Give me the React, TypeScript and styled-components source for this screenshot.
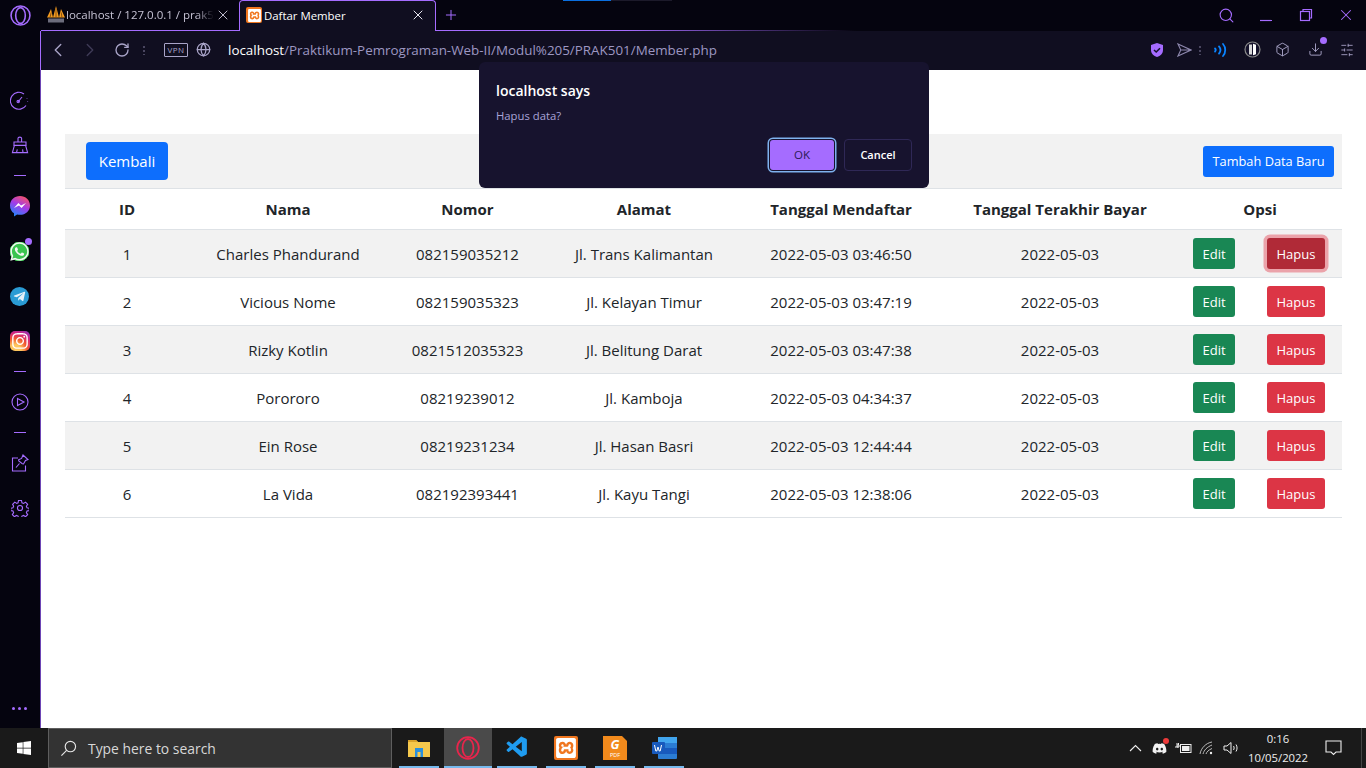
import React from 'react';
import styled, { createGlobalStyle } from 'styled-components';
import {
  LuChevronLeft,
  LuChevronRight,
  LuRotateCw,
  LuGlobe,
  LuX,
  LuPlus,
  LuSearch,
  LuBox,
  LuSlidersHorizontal,
  LuDownload,
} from 'react-icons/lu';
import { FaWhatsapp, FaTelegramPlane, FaInstagram, FaDiscord, FaWindows } from 'react-icons/fa';
import { SiXampp } from 'react-icons/si';
import { VscVscode } from 'react-icons/vsc';

const purple = '#a56cff';
const uiFont = '"Open Sans", "Noto Sans", "Liberation Sans", sans-serif';

const members = [
  ['1', 'Charles Phandurand', '082159035212', 'Jl. Trans Kalimantan', '2022-05-03 03:46:50', '2022-05-03'],
  ['2', 'Vicious Nome', '082159035323', 'Jl. Kelayan Timur', '2022-05-03 03:47:19', '2022-05-03'],
  ['3', 'Rizky Kotlin', '0821512035323', 'Jl. Belitung Darat', '2022-05-03 03:47:38', '2022-05-03'],
  ['4', 'Porororo', '08219239012', 'Jl. Kamboja', '2022-05-03 04:34:37', '2022-05-03'],
  ['5', 'Ein Rose', '08219231234', 'Jl. Hasan Basri', '2022-05-03 12:44:44', '2022-05-03'],
  ['6', 'La Vida', '082192393441', 'Jl. Kayu Tangi', '2022-05-03 12:38:06', '2022-05-03'],
];

const columns = [124, 198, 161, 192, 202, 236, 164];
const headers = ['ID', 'Nama', 'Nomor', 'Alamat', 'Tanggal Mendaftar', 'Tanggal Terakhir Bayar', 'Opsi'];

export default function App() {
  return (
    <Page>
      <GlobalStyle />
      <TabStrip>
        <LogoSlot>
          <OperaMark size={21} color={purple} />
        </LogoSlot>
        <Tab>
          <PmaIcon />
          <TabTitle>localhost / 127.0.0.1 / prak5</TabTitle>
          <TabClose>
            <LuX size={16} strokeWidth={1.5} />
          </TabClose>
        </Tab>
        <ActiveTab>
          <XamppBadge $size={16}>
            <SiXampp size={13} />
          </XamppBadge>
          <ActiveTitle>Daftar Member</ActiveTitle>
          <TabClose $bright>
            <LuX size={16} strokeWidth={1.5} />
          </TabClose>
        </ActiveTab>
        <NewTab>
          <LuPlus size={16} strokeWidth={1.5} />
        </NewTab>
        <LoadBar />
        <WindowControls>
          <WindowBtn>
            <LuSearch size={17} strokeWidth={1.6} />
          </WindowBtn>
          <WindowBtn>
            <svg width="14" height="14" viewBox="0 0 14 14">
              <path d="M1 12.500h12" stroke={purple} strokeWidth="1.200" />
            </svg>
          </WindowBtn>
          <WindowBtn>
            <svg width="14" height="14" viewBox="0 0 14 14" fill="none" stroke={purple} strokeWidth="1.200">
              <rect x="1.500" y="3.500" width="9" height="9" />
              <path d="M4 3.500V1.500h8.500V10h-2" />
            </svg>
          </WindowBtn>
          <WindowBtn>
            <LuX size={18} strokeWidth={1.4} />
          </WindowBtn>
        </WindowControls>
      </TabStrip>

      <AddressBar>
        <NavIcons>
          <NavBtn>
            <LuChevronLeft size={22} strokeWidth={1.5} />
          </NavBtn>
          <NavBtn $dim>
            <LuChevronRight size={22} strokeWidth={1.5} />
          </NavBtn>
          <NavBtn>
            <LuRotateCw size={16} />
          </NavBtn>
          <Dots />
        </NavIcons>
        <VpnBadge>VPN</VpnBadge>
        <LuGlobe size={15} color="#a9a4c8" />
        <Url>
          <b>localhost</b>/Praktikum-Pemrograman-Web-II/Modul%205/PRAK501/Member.php
        </Url>
        <ToolIcons>
          <ToolSlot>
            <svg width="16" height="16" viewBox="0 0 16 16">
              <path d="M8 1l6 2v5c0 3.600-2.600 5.800-6 7-3.400-1.200-6-3.400-6-7V3z" fill={purple} />
              <path d="M5 8l2.200 2L11 6.300" fill="none" stroke="#14112a" strokeWidth="1.600" />
            </svg>
          </ToolSlot>
          <ToolSlot $ml={7}>
            <svg width="15" height="14" viewBox="0 0 15 14" fill="none" stroke="#8d87ad" strokeWidth="1.100">
              <path d="M1 1l13 6-13 6 2.800-6zM3.800 7H14" />
            </svg>
          </ToolSlot>
          <Dots />
          <ToolSlot $ml={5}>
            <svg width="16" height="16" viewBox="0 0 16 16" fill="none" stroke="#0a84ff" strokeWidth="1.800" strokeLinecap="round">
              <path d="M2 6.400c.9 1 .9 2.200 0 3.200M6 4.400c1.800 2.200 1.800 5 0 7.200M10 2c3 3.400 3 8.600 0 12" />
            </svg>
          </ToolSlot>
          <ToolSlot $ml={11}>
            <svg width="17" height="17" viewBox="0 0 17 17">
              <circle cx="8.500" cy="8.500" r="7.500" fill="#14112a" stroke="#8a8a8a" strokeWidth="1.200" />
              <path d="M5 3.500h3v10H5z" fill="#d8d8d8" />
              <path d="M9 2.800l3 1v9.400l-3 1z" fill="#fff" />
            </svg>
          </ToolSlot>
          <ToolSlot $ml={10}>
            <LuBox size={15} color="#a9a4c8" strokeWidth={1.5} />
          </ToolSlot>
          <ToolSlot $ml={13}>
            <LuDownload size={15} color="#a9a4c8" strokeWidth={1.5} />
            <Notice $right={-2} $top={-5} />
          </ToolSlot>
          <ToolSlot $ml={12}>
            <LuSlidersHorizontal size={14} color="#a9a4c8" strokeWidth={1.5} />
          </ToolSlot>
        </ToolIcons>
      </AddressBar>

      <Body>
        <Sidebar>
          <RailIcon>
            <svg width="19" height="19" viewBox="0 0 19 19" fill="none" stroke={purple} strokeWidth="1.100">
              <path d="M16 14.500a8.500 8.500 0 1 1-2-11.500" />
              <path d="M8 11l4-5" />
              <circle cx="8.200" cy="10.600" r="1.200" />
              <path d="M17 7v.6M17.600 10v.6" />
            </svg>
          </RailIcon>
          <RailIcon>
            <svg width="18" height="18" viewBox="0 0 18 18" fill="none" stroke={purple} strokeWidth="1.100">
              <path d="M7 6V2.200c0-1.400 3.600-1.400 3.600 0V6" />
              <path d="M3 6h12v3.400H3z" />
              <path d="M3.400 9.400L1.400 16.600h15.200L14.600 9.400M5.500 16.600l.8-3.200M12 16.600l-.4-3.200" />
            </svg>
          </RailIcon>
          <RailRule />
          <RailIcon>
            <svg width="20" height="21" viewBox="0 0 20 21">
              <defs>
                <linearGradient id="msgr" x1="0.700" y1="0" x2="0.200" y2="1">
                  <stop offset="0" stopColor="#f5536b" />
                  <stop offset="0.450" stopColor="#a33be8" />
                  <stop offset="1" stopColor="#1a8cff" />
                </linearGradient>
              </defs>
              <path d="M10 0c5.600 0 10 4 10 9.400s-4.400 9.400-10 9.400c-1 0-2-.1-2.900-.4L4 20.500v-3.200C1.500 15.600 0 12.700 0 9.400 0 4 4.400 0 10 0z" fill="url(#msgr)" />
              <path d="M4 12l4.400-5 2.600 2.400L16 7l-4.400 5-2.600-2.400z" fill="#fff" />
            </svg>
          </RailIcon>
          <RailIcon>
            <WhatsappWrap>
              <FaWhatsapp size={21} />
              <Notice $right={-2} $top={-3} />
            </WhatsappWrap>
          </RailIcon>
          <RailIcon>
            <TelegramRound>
              <FaTelegramPlane size={13} />
            </TelegramRound>
          </RailIcon>
          <RailIcon>
            <InstagramSquare>
              <FaInstagram size={18} />
            </InstagramSquare>
          </RailIcon>
          <RailRule />
          <RailIcon>
            <svg width="18" height="18" viewBox="0 0 18 18" fill="none" stroke={purple} strokeWidth="1.100">
              <circle cx="9" cy="9" r="8" />
              <path d="M6.500 5.500L13 9l-6.500 3.500z" />
            </svg>
          </RailIcon>
          <RailRule />
          <RailIcon>
            <svg width="18" height="18" viewBox="0 0 18 18" fill="none" stroke={purple} strokeWidth="1.100">
              <path d="M7 4H1.500v13h13v-5.500" />
              <path d="M12 1l5 4.500-2.500 1-2 3.500-1.200-.2L7.800 7l-.2-1.200 3-1.400z" />
              <path d="M8.500 9.500L5 13.500" />
            </svg>
          </RailIcon>
          <RailIcon>
            <svg width="18" height="18" viewBox="0 0 24 24" fill="none" stroke={purple} strokeWidth="1.500">
              <circle cx="12" cy="12" r="3.400" />
              <path d="M10 2h4l.6 3 2.200.9 2.600-1.700 2.800 2.800-1.700 2.600.9 2.200 3 .6v3l-3 .6-.9 2.200 1.700 2.600-2.800 2.800-2.600-1.700-2.200.9-.6 3h-4l-.6-3-2.200-.9-2.600 1.700-2.800-2.800 1.700-2.600-.9-2.200-3-.6v-3l3-.6.9-2.200L2.200 7l2.800-2.800 2.600 1.700L9.400 5z" />
            </svg>
          </RailIcon>
          <RailDots>
            <i />
            <i />
            <i />
          </RailDots>
        </Sidebar>

        <Content>
          <TopPanel>
            <BackButton>Kembali</BackButton>
            <AddButton>Tambah Data Baru</AddButton>
          </TopPanel>
          <MemberTable>
            <colgroup>
              {columns.map((w, i) => (
                <col key={i} width={w} />
              ))}
            </colgroup>
            <thead>
              <tr>
                {headers.map((h) => (
                  <Th key={h}>{h}</Th>
                ))}
              </tr>
            </thead>
            <tbody>
              {members.map((row, i) => (
                <Row key={row[0]} $striped={i % 2 === 0}>
                  {row.map((cell, j) => (
                    <Td key={j}>{cell}</Td>
                  ))}
                  <ActionCell>
                    <Actions>
                      <EditButton>Edit</EditButton>
                      <DeleteButton $focus={i === 0}>Hapus</DeleteButton>
                    </Actions>
                  </ActionCell>
                </Row>
              ))}
            </tbody>
          </MemberTable>
        </Content>
      </Body>

      <Taskbar>
        <StartBtn>
          <FaWindows size={16} />
        </StartBtn>
        <SearchBox>
          <svg width="17" height="17" viewBox="0 0 18 18" fill="none" stroke="#e6e6e6" strokeWidth="1.200">
            <circle cx="11" cy="7" r="5.500" />
            <path d="M7 11l-5.500 5.500" />
          </svg>
          <span>Type here to search</span>
        </SearchBox>
        <TaskApps>
          <TaskApp $width={40} $gap={0}>
            <svg width="22" height="19" viewBox="0 0 22 19">
              <path d="M0 2h8l2 2h12v15H0z" fill="#f5c84c" />
              <path d="M0 2h8l2 2H0z" fill="#d9a22a" />
              <path d="M7 10h8v9h-2.500v-5h-3v5H7z" fill="#2a8fdc" />
            </svg>
          </TaskApp>
          <TaskApp $active $width={48} $gap={5}>
            <OperaMark size={24} color="#e8254c" />
          </TaskApp>
          <TaskApp $width={40} $gap={5}>
            <VscVscode size={25} color="#1f9cf0" />
          </TaskApp>
          <TaskApp $width={40} $gap={9}>
            <XamppBadge $size={24}>
              <SiXampp size={20} />
            </XamppBadge>
          </TaskApp>
          <TaskApp $width={40} $gap={9}>
            <FoxitBadge>
              <b>G</b>
              <small>PDF</small>
            </FoxitBadge>
          </TaskApp>
          <TaskApp $width={40} $gap={9}>
            <svg width="25" height="22" viewBox="0 0 25 22">
              <rect x="6" y="0" width="19" height="22" rx="1" fill="#2b7cd3" />
              <rect x="6" y="0" width="19" height="6" fill="#41a5ee" />
              <rect x="6" y="11" width="19" height="6" fill="#185abd" />
              <rect x="0" y="5" width="13" height="12" rx="1" fill="#185abd" />
              <path d="M2.500 8l1.300 6h1l1.200-4 1.200 4h1l1.300-6" fill="none" stroke="#fff" strokeWidth="1" />
            </svg>
          </TaskApp>
        </TaskApps>
        <Tray>
          <TraySlot>
            <svg width="13" height="8" viewBox="0 0 13 8" fill="none" stroke="#eee" strokeWidth="1.100">
              <path d="M1 7l5.500-5.500L12 7" />
            </svg>
          </TraySlot>
          <TraySlot>
            <DiscordWrap>
              <FaDiscord size={15} />
              <RedDot />
            </DiscordWrap>
          </TraySlot>
          <TraySlot>
            <svg width="17" height="12" viewBox="0 0 17 12" fill="none" stroke="#eee">
              <rect x="5.500" y="2.500" width="10.500" height="8" />
              <rect x="7" y="4" width="7.500" height="5" fill="#eee" stroke="none" />
              <path d="M0 5h3.500M2 1v2M3.500 1v2M2 3h2v2H2z" />
            </svg>
          </TraySlot>
          <TraySlot>
            <svg width="16" height="14" viewBox="0 0 16 14" fill="none" stroke="#bbb" strokeWidth="1">
              <path d="M1 13C2 7 7 2 13 1M4 13c1-4 4-7 9-9M7 13c.5-2 2.500-4 6-5.500" />
              <circle cx="12" cy="12" r="1.200" fill="#eee" stroke="none" />
            </svg>
          </TraySlot>
          <TraySlot>
            <svg width="17" height="14" viewBox="0 0 17 14" fill="none" stroke="#eee" strokeWidth="1">
              <path d="M1 5h3l4-3.500v11L4 9H1z" />
              <path d="M10.500 5c.8 1.200.8 2.800 0 4M13 3.500c1.400 2 1.400 5 0 7" />
            </svg>
          </TraySlot>
          <Clock>
            <span>0:16</span>
            <span>10/05/2022</span>
          </Clock>
          <TraySlot $wide>
            <svg width="17" height="16" viewBox="0 0 17 16" fill="none" stroke="#eee" strokeWidth="1.100">
              <path d="M1 1h15v11h-5l-2.500 2.500L6 12H1z" />
            </svg>
          </TraySlot>
        </Tray>
      </Taskbar>

      <AlertBox>
        <AlertTitle>localhost says</AlertTitle>
        <AlertText>Hapus data?</AlertText>
        <AlertActions>
          <OkButton>OK</OkButton>
          <CancelButton>Cancel</CancelButton>
        </AlertActions>
      </AlertBox>
    </Page>
  );
}

function OperaMark({ size, color }: { size: number; color: string }) {
  return (
    <svg width={size} height={size} viewBox="0 0 24 24" fill="none" stroke={color} strokeWidth="1.800">
      <circle cx="12" cy="12" r="10.800" />
      <ellipse cx="12" cy="12" rx="5.500" ry="9" />
    </svg>
  );
}

function PmaIcon() {
  return (
    <svg width="18" height="17" viewBox="0 0 18 17">
      <path d="M0 11.500L4 3l2 8.500zM6 11.500L9 0l3 11.500zM12 11.500L14 3l4 8.500z" fill="#f29a1f" />
      <path d="M3 11.500l1.200-5M9 11.500V3M15 11.500l-.8-5" stroke="#7a4a10" strokeWidth=".9" />
      <rect x="1" y="12.500" width="16" height="4" fill="#6c6c7c" />
    </svg>
  );
}

const GlobalStyle = createGlobalStyle`
  html, body {
    margin: 0;
    padding: 0;
    background: #fff;
    overflow: hidden;
  }
  * {
    box-sizing: border-box;
  }
`;

const Page = styled.div`
  position: relative;
  width: 1366px;
  height: 768px;
  display: flex;
  flex-direction: column;
  background: #05040f;
  font-family: ${uiFont};
  overflow: hidden;
`;

const TabStrip = styled.div`
  position: relative;
  height: 31px;
  flex: none;
  display: flex;
  align-items: flex-start;
  background: #05040f;

  &::after {
    content: '';
    position: absolute;
    left: 436px;
    bottom: 0;
    width: 420px;
    height: 1px;
    background: linear-gradient(90deg, ${purple} 0 45%, transparent 100%);
  }
`;

const LogoSlot = styled.div`
  width: 41px;
  height: 31px;
  flex: none;
  display: flex;
  align-items: center;
  justify-content: center;
`;

const Tab = styled.div`
  width: 198px;
  height: 31px;
  flex: none;
  display: flex;
  align-items: center;
  padding: 0 8px 1px 6px;
  gap: 1px;
  border-bottom: 1px solid ${purple};
`;

const TabTitle = styled.span`
  flex: 1;
  min-width: 0;
  overflow: hidden;
  white-space: nowrap;
  font-size: 11.500px;
  color: #c6c3d4;
  mask-image: linear-gradient(90deg, #000 88%, transparent 100%);
`;

const TabClose = styled.span<{ $bright?: boolean }>`
  display: flex;
  color: ${(p) => (p.$bright ? '#e8e6f0' : '#bdbacb')};
`;

const ActiveTab = styled.div`
  width: 197px;
  height: 31px;
  flex: none;
  display: flex;
  align-items: center;
  padding: 0 9px 2px 6px;
  gap: 2px;
  background: #100e20;
  border: 1px solid ${purple};
  border-bottom: none;
  border-radius: 4px 4px 0 0;
`;

const ActiveTitle = styled.span`
  flex: 1;
  font-size: 11.400px;
  font-weight: 500;
  color: #fff;
`;

const XamppBadge = styled.span<{ $size: number }>`
  width: ${(p) => p.$size}px;
  height: ${(p) => p.$size}px;
  flex: none;
  display: flex;
  align-items: center;
  justify-content: center;
  border-radius: 2px;
  background: #f0761f;
  color: #fff;
`;

const NewTab = styled.span`
  display: flex;
  align-items: center;
  height: 30px;
  padding-left: 7px;
  color: ${purple};
`;

const LoadBar = styled.div`
  position: absolute;
  left: 563px;
  top: 0;
  width: 109px;
  height: 1px;
  background: linear-gradient(90deg, #0a6fe0 0 44%, #1c1a2a 44% 100%);
`;

const WindowControls = styled.div`
  margin-left: auto;
  display: flex;
  align-items: center;
  height: 30px;
`;

const WindowBtn = styled.span`
  width: 40px;
  height: 30px;
  display: flex;
  align-items: center;
  justify-content: center;
  color: ${purple};
`;

const AddressBar = styled.div`
  height: 39px;
  flex: none;
  margin-left: 40px;
  display: flex;
  align-items: center;
  padding: 0 9px 2px 1px;
  background: #100e20;
  border-left: 1px solid ${purple};
`;

const NavIcons = styled.div`
  display: flex;
  align-items: center;
  width: 122px;
  flex: none;
`;

const NavBtn = styled.span<{ $dim?: boolean }>`
  width: 32px;
  display: flex;
  justify-content: center;
  color: ${(p) => (p.$dim ? '#3f3b57' : '#a9a4c8')};
`;

const Dots = styled.span`
  width: 2px;
  height: 10px;
  margin: 0 5px;
  background-image: radial-gradient(circle, #4a4660 1px, transparent 1px);
  background-size: 2px 4px;
`;

const VpnBadge = styled.span`
  width: 24px;
  height: 14px;
  margin-right: 8px;
  flex: none;
  display: flex;
  align-items: center;
  justify-content: center;
  border: 1px solid #a9a4c8;
  border-radius: 1px;
  font-size: 8px;
  letter-spacing: 0.5px;
  color: #a9a4c8;
`;

const Url = styled.div`
  margin-left: 17px;
  flex: 1;
  font-size: 13.400px;
  white-space: nowrap;
  color: #9d97c2;

  b {
    font-weight: 400;
    color: #fff;
  }
`;

const ToolIcons = styled.div`
  display: flex;
  align-items: center;
`;

const ToolSlot = styled.span<{ $ml?: number }>`
  position: relative;
  width: 20px;
  margin-left: ${(p) => p.$ml ?? 0}px;
  display: flex;
  justify-content: center;
`;

const Notice = styled.span<{ $right: number; $top: number }>`
  position: absolute;
  right: ${(p) => p.$right}px;
  top: ${(p) => p.$top}px;
  width: 7px;
  height: 7px;
  border-radius: 50%;
  background: ${purple};
`;

const Body = styled.div`
  flex: 1;
  min-height: 0;
  display: flex;
`;

const Sidebar = styled.nav`
  width: 41px;
  flex: none;
  display: flex;
  flex-direction: column;
  align-items: center;
  gap: 15px;
  padding: 15px 1px 18px 0;
  background: #05040f;
  border-right: 1px solid #6d45b5;
`;

const RailIcon = styled.div`
  width: 30px;
  height: 30px;
  flex: none;
  display: flex;
  align-items: center;
  justify-content: center;
`;

const RailRule = styled.div`
  width: 12px;
  height: 1px;
  flex: none;
  background: ${purple};
`;

const RailDots = styled.div`
  margin-top: auto;
  display: flex;
  gap: 3px;

  i {
    width: 3px;
    height: 3px;
    border-radius: 50%;
    background: ${purple};
  }
`;

const WhatsappWrap = styled.span`
  position: relative;
  display: flex;
  color: #f2f6f2;
  border-radius: 50%;
  background: radial-gradient(circle, #3ac44f 0 66%, transparent 67%);
`;

const TelegramRound = styled.span`
  width: 19px;
  height: 19px;
  display: flex;
  align-items: center;
  justify-content: center;
  border-radius: 50%;
  background: #2a9bd4;
  color: #e4f2fa;
`;

const InstagramSquare = styled.span`
  width: 20px;
  height: 20px;
  display: flex;
  align-items: center;
  justify-content: center;
  border-radius: 5px;
  color: #fff;
  background: radial-gradient(circle at 25% 100%, #fdc65e 0 25%, #f0562f 50%, #d4267f 72%, #7a35c9 100%);
`;

const Content = styled.main`
  flex: 1;
  min-width: 0;
  padding: 64px 24px 0;
  background: #fff;
  font-family: ${uiFont};
  color: #212529;
`;

const TopPanel = styled.div`
  height: 55px;
  display: flex;
  align-items: center;
  justify-content: space-between;
  padding: 0 8px 0 21px;
  background: #f2f2f2;
  border-bottom: 1px solid #dee2e6;
`;

const BackButton = styled.button`
  height: 38px;
  width: 82px;
  padding: 0;
  border: none;
  border-radius: 4px;
  background: #0d6efd;
  color: #fff;
  font: 400 15px ${uiFont};
`;

const AddButton = styled.button`
  height: 31px;
  width: 131px;
  padding: 0;
  border: none;
  border-radius: 3px;
  background: #0d6efd;
  color: #fff;
  font: 400 12.800px ${uiFont};
`;

const MemberTable = styled.table`
  width: 1277px;
  table-layout: fixed;
  border-collapse: collapse;
  font-size: 15px;
`;

const Th = styled.th`
  height: 40px;
  padding: 0;
  font-weight: 700;
  text-align: center;
  border-bottom: 1px solid #dee2e6;
`;

const Row = styled.tr<{ $striped: boolean }>`
  background: ${(p) => (p.$striped ? '#f2f2f2' : '#fff')};
`;

const Td = styled.td`
  height: 48px;
  padding: 2px 0 0;
  text-align: center;
  border-bottom: 1px solid #dee2e6;
`;

const ActionCell = styled(Td)`
  padding: 0;
`;

const Actions = styled.div`
  display: flex;
  align-items: center;
  padding-left: 15px;
  gap: 32px;
`;

const EditButton = styled.button`
  width: 42px;
  height: 31px;
  padding: 2px 0 0;
  border: none;
  border-radius: 3px;
  background: #198754;
  color: #fff;
  font: 400 13px ${uiFont};
`;

const DeleteButton = styled.button<{ $focus?: boolean }>`
  width: 58px;
  height: 31px;
  padding: 2px 0 0;
  border: none;
  border-radius: 3px;
  background: ${(p) => (p.$focus ? '#b02a37' : '#dc3545')};
  box-shadow: ${(p) => (p.$focus ? '0 0 0 3.500px #eba3aa' : 'none')};
  color: #fff;
  font: 400 13px ${uiFont};
`;

const AlertBox = styled.div`
  position: absolute;
  left: 479px;
  top: 62px;
  width: 450px;
  height: 126px;
  padding: 19px 17px 17px;
  display: flex;
  flex-direction: column;
  background: #17132e;
  border-radius: 6px;
`;

const AlertTitle = styled.div`
  font-size: 14px;
  line-height: 20px;
  font-weight: 600;
  color: #fff;
`;

const AlertText = styled.div`
  margin-top: 7px;
  font-size: 11.300px;
  line-height: 16px;
  color: #a9a4d8;
`;

const AlertActions = styled.div`
  margin-top: auto;
  display: flex;
  align-items: center;
  justify-content: flex-end;
  gap: 10px;
`;

const OkButton = styled.button`
  width: 64px;
  height: 30px;
  padding: 0 0 2px;
  border: none;
  border-radius: 3px;
  box-shadow: 0 0 0 1px #17132e, 0 0 0 2.500px #7fb2ee;
  background: ${purple};
  color: #2a1a55;
  font: 400 11.500px ${uiFont};
`;

const CancelButton = styled.button`
  width: 68px;
  height: 32px;
  padding: 0 0 2px;
  border: 1px solid #2f2856;
  border-radius: 4px;
  background: transparent;
  color: #fff;
  font: 600 11px ${uiFont};
`;

const Taskbar = styled.div`
  height: 40px;
  flex: none;
  display: flex;
  align-items: stretch;
  background: #1a1a1a;
`;

const StartBtn = styled.div`
  width: 48px;
  flex: none;
  display: flex;
  align-items: center;
  justify-content: center;
  color: #fff;
`;

const SearchBox = styled.div`
  width: 344px;
  flex: none;
  display: flex;
  align-items: center;
  gap: 11px;
  padding-left: 11px;
  background: #333;
  border: 1px solid #5e5e5e;
  color: #d8d8d8;
  font-size: 13.900px;
`;

const TaskApps = styled.div`
  display: flex;
  padding-left: 7px;
`;

const TaskApp = styled.div<{ $active?: boolean; $width: number; $gap: number }>`
  width: ${(p) => p.$width}px;
  margin-left: ${(p) => p.$gap}px;
  display: flex;
  align-items: center;
  justify-content: center;
  padding-top: 1px;
  background: ${(p) => (p.$active ? '#4a4a4a' : 'transparent')};
  border-bottom: 2px solid #76b9ed;
`;

const FoxitBadge = styled.span`
  position: relative;
  width: 24px;
  height: 24px;
  display: flex;
  flex-direction: column;
  align-items: center;
  background: #f28a1c;
  color: #fff;

  &::after {
    content: '';
    position: absolute;
    right: 0;
    top: 0;
    border-style: solid;
    border-width: 0 5px 5px 0;
    border-color: transparent #1a1a1a transparent transparent;
  }

  b {
    height: 16px;
    font-size: 13px;
    line-height: 16px;
    font-style: italic;
  }
  small {
    height: 7px;
    font-size: 5.500px;
    line-height: 7px;
  }
`;

const Tray = styled.div`
  margin-left: auto;
  margin-right: 4px;
  display: flex;
  align-items: center;
  padding-right: 8px;
  color: #eee;
  border-right: 1px solid #444;
`;

const TraySlot = styled.div<{ $wide?: boolean }>`
  width: ${(p) => (p.$wide ? 40 : 24)}px;
  display: flex;
  justify-content: center;
`;

const DiscordWrap = styled.span`
  position: relative;
  display: flex;
  color: #f2f2f2;
`;

const RedDot = styled.i`
  position: absolute;
  right: -2px;
  top: -3px;
  width: 6px;
  height: 6px;
  border-radius: 50%;
  background: #ed3b3b;
`;

const Clock = styled.div`
  width: 70px;
  display: flex;
  flex-direction: column;
  align-items: center;
  font-size: 11.300px;
  line-height: 19px;
`;
